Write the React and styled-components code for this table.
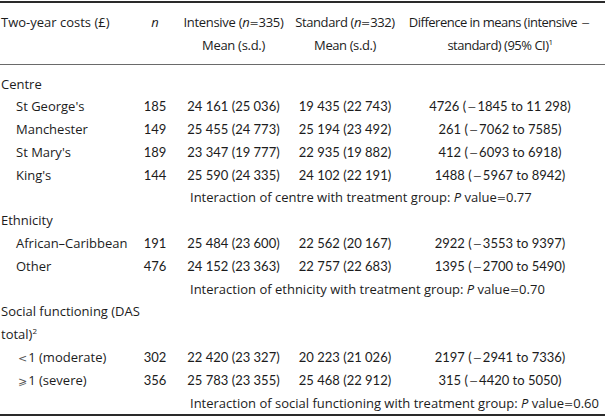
import styled, { createGlobalStyle } from 'styled-components';

const GlobalStyle = createGlobalStyle`
  html, body {
    margin: 0;
    padding: 0;
    background: #fff;
  }
  body {
    font-family: "Open Sans", Lato, "DejaVu Sans", sans-serif;
    color: #1c1c1c;
  }
`;

const Table = styled.table`
  width: 605px;
  table-layout: fixed;
  border-collapse: collapse;
  font-size: 13px;
  margin-top: 1px;
  border-top: 2px solid #2a2a2a;
  border-bottom: 2px solid #2a2a2a;
`;

const HeadRow = styled.tr`
  border-bottom: 1px solid #6a6a6a;
`;

const Th = styled.th`
  font-weight: normal;
  line-height: 23px;
  height: 46px;
  padding: 7.5px 0 7.5px ${(p) => p.$pad || 0}px;
  vertical-align: top;
  text-align: ${(p) => p.$align || 'center'};
  letter-spacing: ${(p) => p.$tight || 0}px;
  white-space: nowrap;
`;

const Td = styled.td`
  font-family: ${(p) => (p.$num ? 'Lato, "Open Sans", sans-serif' : 'inherit')};
  line-height: 22.8px;
  padding: ${(p) => (p.$first ? '7.5px' : '0')} 0 0 ${(p) => p.$indent || 0}px;
  text-align: ${(p) => p.$align || 'center'};
  vertical-align: top;
  white-space: nowrap;
`;

const Sup = styled.sup`
  font-size: 8px;
  line-height: 0;
  vertical-align: 5px;
`;

const Op = styled.span`
  font-family: "DejaVu Sans", sans-serif;
  font-size: 11px;
  line-height: 0;
  letter-spacing: 0;
  color: #555;
  padding: 0 ${(p) => p.$gap || 0}px;
`;

const Minus = () => <Op $gap={1}>{'\u2212'}</Op>;
const Eq = () => <Op>=</Op>;

const groups = [
  {
    title: 'Centre',
    rows: [
      ["St George's", '185', '24 161 (25 036)', '19 435 (22 743)', '4726', '1845 to 11 298'],
      ['Manchester', '149', '25 455 (24 773)', '25 194 (23 492)', '261', '7062 to 7585'],
      ["St Mary's", '189', '23 347 (19 777)', '22 935 (19 882)', '412', '6093 to 6918'],
      ["King's", '144', '25 590 (24 335)', '24 102 (22 191)', '1488', '5967 to 8942'],
    ],
    note: 'centre',
    p: '0.77',
  },
  {
    title: 'Ethnicity',
    rows: [
      ['African\u2013Caribbean', '191', '25 484 (23 600)', '22 562 (20 167)', '2922', '3553 to 9397'],
      ['Other', '476', '24 152 (23 363)', '22 757 (22 683)', '1395', '2700 to 5490'],
    ],
    note: 'ethnicity',
    p: '0.70',
  },
  {
    title: (
      <>
        Social functioning (DAS
        <br />
        total)<Sup>2</Sup>
      </>
    ),
    rows: [
      [<><Op $gap={1}>{'<'}</Op>1 (moderate)</>, '302', '22 420 (23 327)', '20 223 (21 026)', '2197', '2941 to 7336'],
      [<><Op $gap={1}>{'\u2A7E'}</Op>1 (severe)</>, '356', '25 783 (23 355)', '25 468 (22 912)', '315', '4420 to 5050'],
    ],
    note: 'social functioning',
    p: '0.60',
  },
];

export default function App() {
  return (
    <>
      <GlobalStyle />
      <Table>
        <colgroup>
          <col style={{ width: 138 }} />
          <col style={{ width: 34 }} />
          <col style={{ width: 123 }} />
          <col style={{ width: 100 }} />
          <col style={{ width: 210 }} />
        </colgroup>
        <thead>
          <HeadRow>
            <Th $align="left" $pad={1}>Two-year costs (£)</Th>
            <Th><i>n</i></Th>
            <Th $tight={-0.3}>
              Intensive (<i>n</i><Eq />335)
              <br />
              Mean (s.d.)
            </Th>
            <Th $tight={-0.4}>
              Standard (<i>n</i><Eq />332)
              <br />
              Mean (s.d.)
            </Th>
            <Th $tight={-0.5}>
              Difference in means (intensive <Minus />
              <br />
              standard) (95% CI)<Sup>1</Sup>
            </Th>
          </HeadRow>
        </thead>
        <tbody>
          {groups.map((g, gi) => (
            <>
              <tr key={`t${gi}`}>
                <Td $align="left" $indent={1} $first={gi === 0}>
                  {g.title}
                </Td>
                <Td colSpan={4} $first={gi === 0} />
              </tr>
              {g.rows.map((r, ri) => (
                <tr key={`r${gi}-${ri}`}>
                  <Td $align="left" $indent={gi === 2 ? 17 : 16}>{r[0]}</Td>
                  <Td $num>{r[1]}</Td>
                  <Td $num>{r[2]}</Td>
                  <Td $num>{r[3]}</Td>
                  <Td $num>
                    {r[4]} (<Minus />{r[5]})
                  </Td>
                </tr>
              ))}
              <tr key={`n${gi}`}>
                <Td colSpan={2} />
                <Td colSpan={3} $align="left" $indent={18}>
                  Interaction of {g.note} with treatment group: <i>P</i> value<Eq />{g.p}
                </Td>
              </tr>
            </>
          ))}
        </tbody>
      </Table>
    </>
  );
}
